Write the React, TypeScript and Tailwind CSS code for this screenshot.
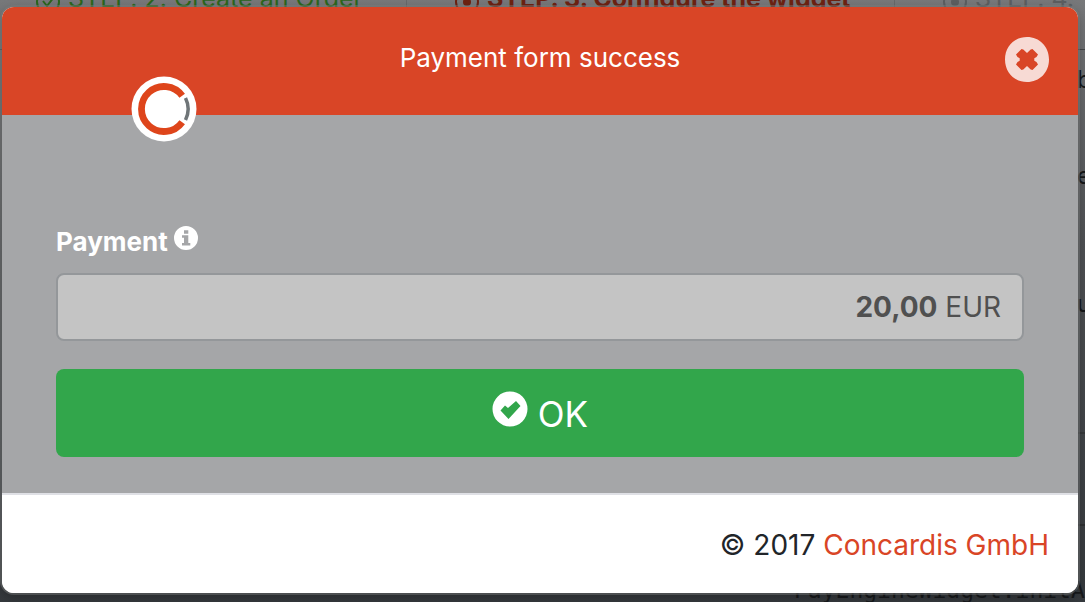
import React from "react";

function InfoIcon() {
  return (
    <svg viewBox="0 0 24 24" className="size-6" fill="currentColor" aria-hidden="true">
      <path
        fillRule="evenodd"
        d="M12 0a12 12 0 1 1 0 24a12 12 0 0 1 0-24zM10 4.200v3.600h4.300V4.200zM8 9.300v2.500h2v5.200H8v2.500h8.300V17h-2V9.300z"
      />
    </svg>
  );
}

function CheckIcon() {
  return (
    <svg viewBox="0 0 36 36" className="size-9" fill="currentColor" aria-hidden="true">
      <path
        fillRule="evenodd"
        d="M18 .5a17.500 17.500 0 1 1 0 35a17.500 17.500 0 0 1 0-35zM24 10L28.500 15L16.500 28L8.500 19.500L13 14.500L16 17z"
      />
    </svg>
  );
}

function CloseIcon() {
  return (
    <svg viewBox="0 0 44 45" className="h-[45px] w-11" fill="currentColor" aria-hidden="true">
      <path
        fillRule="evenodd"
        d="M22 0C34.500 0 44 9.500 44 22.500S34.500 45 22 45S0 35.500 0 22.500S9.500 0 22 0zM16.500 12L11 17.500l1.500 2.500l2.200 1.200v2.600L12.500 25L11 27.500L16.500 33l1.800-.5L22 29l3.700 3.500l1.800.5L33 27.500L31.500 25l-2.200-1.200v-2.600l2.200-1.200L33 17.500L27.500 12l-1.800.5L22 16l-3.700-3.500z"
      />
    </svg>
  );
}

function Logo() {
  return (
    <svg viewBox="0 0 66 66" className="absolute top-[69px] left-[129px] size-[66px]" role="img" aria-label="Concardis">
      <circle cx="33" cy="33" r="32.500" fill="#fff" />
      <path d="M51.200 19.800A22.500 22.500 0 1 0 51.200 46.200" fill="none" stroke="#de451b" strokeWidth="6.800" />
      <path d="M54.500 22A25 25 0 0 1 54.500 44" fill="none" stroke="#6f7578" strokeWidth="3.500" />
    </svg>
  );
}

function StepIcon({ done }: { done?: boolean }) {
  return (
    <svg viewBox="0 0 24 24" className="size-6" fill="none" stroke="currentColor" strokeWidth="2" aria-hidden="true">
      <circle cx="12" cy="12" r="11" />
      {done ? <path d="m7 11 4 5 7-9" /> : <circle cx="12" cy="12" r="3" fill="currentColor" />}
    </svg>
  );
}

function Backdrop() {
  return (
    <div
      aria-hidden="true"
      className="absolute inset-0 flex flex-col overflow-hidden bg-linear-to-b from-[#77787a] via-[#505255] via-40% to-[#35393d]"
    >
      <div className="-mt-[18px] flex h-[68px] shrink-0 border-b border-[#444648] text-[25px] leading-8 whitespace-nowrap">
        <div className="flex w-[407px] shrink-0 items-start border-r border-[#66686a] pl-9 text-[#2b661c]">
          <div className="flex items-end gap-2"><StepIcon done />STEP. 2. Create an Order</div>
        </div>
        <div className="flex w-[488px] shrink-0 items-start border-r border-[#66686a] pl-12 font-bold text-[#6d2212]">
          <div className="flex items-end gap-2"><StepIcon />STEP. 3. Configure the widget</div>
        </div>
        <div className="flex shrink-0 items-start pl-12 text-[#5c5e60]">
          <div className="flex items-end gap-2"><StepIcon />STEP. 4.</div>
        </div>
      </div>
      <div className="flex w-2 grow flex-col self-end pt-3.5 text-2xl text-[#151719]">
        <p>b</p>
        <p className="mt-16">e</p>
        <p className="mt-24">u</p>
        <hr className="mt-28 border-t-2 border-[#36383a]" />
        <hr className="mt-[90px] border-t-2 border-[#2e3032]" />
      </div>
      <p className="pl-[794px] font-['DejaVu_Sans_Mono',monospace] text-[23px] leading-6 whitespace-nowrap text-[#17191b]">
        PayEngineWidget.initA
      </p>
    </div>
  );
}

export default function App() {
  return (
    <div className="relative h-screen overflow-hidden pt-[7px] pr-[7px] pb-[9px] pl-0.5 font-['Inter',sans-serif]">
      <Backdrop />
      <main
        role="dialog"
        aria-labelledby="dialog-title"
        className="relative flex h-full flex-col rounded-xl bg-white shadow-[0_0_0_2px_#7b7d7d70,0_4px_12px_#00000050]"
      >
        <header className="relative grid h-[108px] shrink-0 grid-cols-[1fr_auto_1fr] items-center rounded-t-xl bg-[#d94526] px-[29px] pb-1">
          <h1 id="dialog-title" className="col-start-2 pb-0.5 text-[26px] leading-9 text-white">Payment form success</h1>
          <button type="button" aria-label="Close" className="justify-self-end text-white/80">
            <CloseIcon />
          </button>
          <Logo />
        </header>
        <form className="flex grow flex-col bg-[#a5a6a8] px-[54px] pt-[109px]" onSubmit={(e) => e.preventDefault()}>
          <div className="flex h-9 items-center gap-1.5 text-white">
            <span id="payment-label" className="text-[26px] leading-9 font-bold">Payment</span>
            <span className="-mt-2"><InfoIcon /></span>
          </div>
          <output
            aria-labelledby="payment-label"
            className="mt-[13px] block h-[68px] rounded-lg border-2 border-[#94979a] bg-[#c4c4c4] px-[21px] text-right text-[28px] leading-16 text-[#505050]"
          >
            <b className="font-bold">20,00</b> EUR
          </output>
          <button
            type="submit"
            className="mt-7 flex h-[88px] items-center justify-center gap-2.5 rounded-lg bg-[#32a64b] pt-0.5 text-[35px] text-white"
          >
            <span className="-mt-2.5"><CheckIcon /></span>
            OK
          </button>
        </form>
        <footer className="flex h-[100px] shrink-0 items-center justify-end rounded-b-xl border-t-2 border-[#dfe0e5] bg-white pt-0.5 pr-[29px] text-[28px] text-[#212529]">
          <p>
            © 2017 <a href="#concardis" className="text-[#d94526]">Concardis GmbH</a>
          </p>
        </footer>
      </main>
    </div>
  );
}
